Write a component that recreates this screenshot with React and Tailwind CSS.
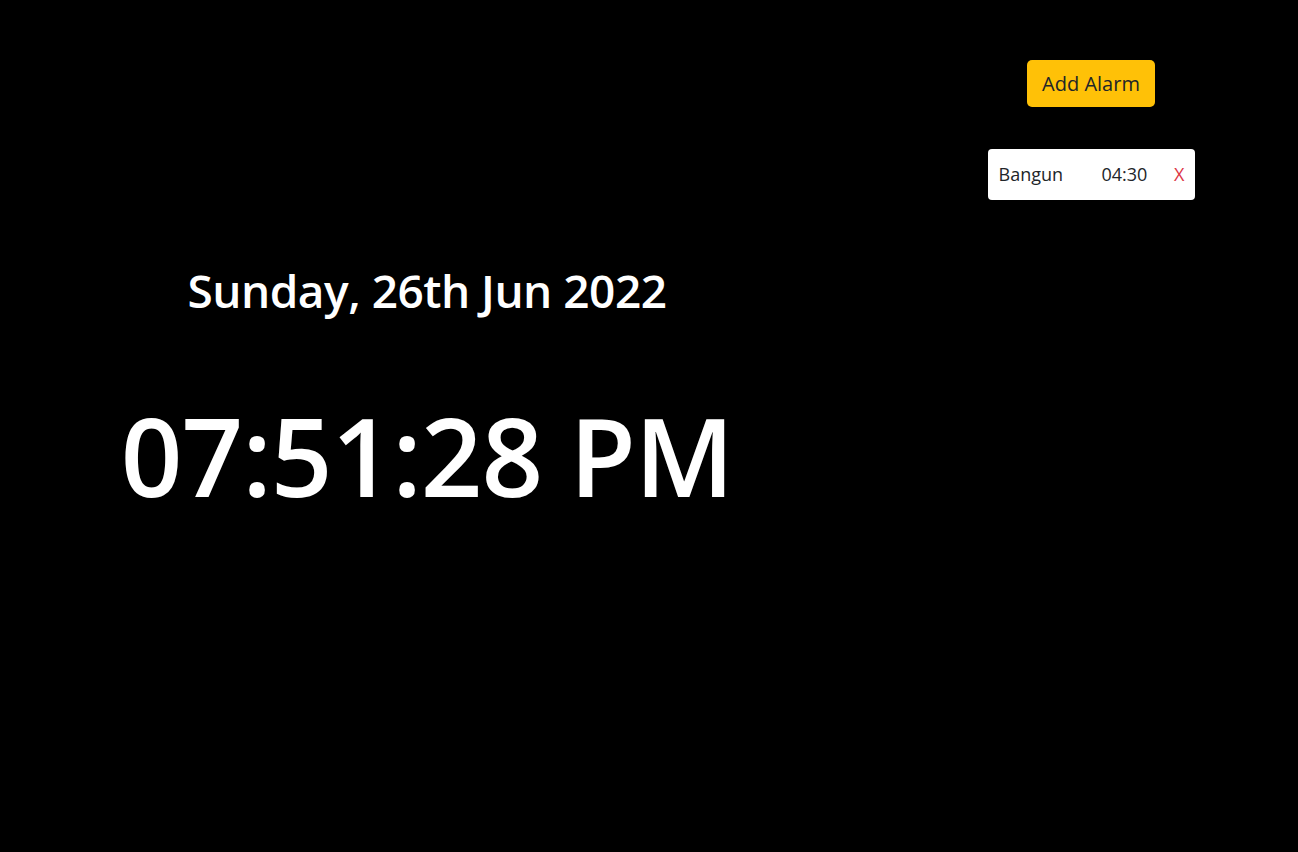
import React from 'react';

const alarms = [{ name: 'Bangun', time: '04:30' }];

export default function App() {
  return (
    <div
      className="w-[1298px] h-[852px] bg-black overflow-hidden flex"
      style={{ fontFamily: '"Open Sans", "Noto Sans", sans-serif' }}
    >
      {/* Clock side */}
      <div className="w-[854px] flex flex-col items-center pt-[262px]">
        <h2 className="text-[46px] leading-[56px] font-semibold text-white tracking-[-0.5px]">
          Sunday, 26th Jun 2022
        </h2>
        <h1 className="mt-[74px] text-[108px] leading-[128px] font-semibold text-white tracking-[-1px]">
          07:51:28 PM
        </h1>
      </div>

      {/* Alarm side */}
      <div className="ml-[87px] w-[300px] flex flex-col items-center pt-[60px]">
        <button className="h-[47px] px-[15px] rounded-[5px] bg-[#ffc107] text-[#212529] text-[20px]">
          Add Alarm
        </button>
        <div className="mt-[42px] flex flex-col gap-2">
          {alarms.map((a) => (
            <div
              key={a.name}
              className="w-[207px] h-[51px] bg-white rounded-[4px] flex items-center pl-[11px] pr-[10px] text-[18px] text-[#212529]"
            >
              <span className="w-[103px]">{a.name}</span>
              <span className="flex-1">{a.time}</span>
              <span className="text-[#dc3545]">X</span>
            </div>
          ))}
        </div>
      </div>
    </div>
  );
}
